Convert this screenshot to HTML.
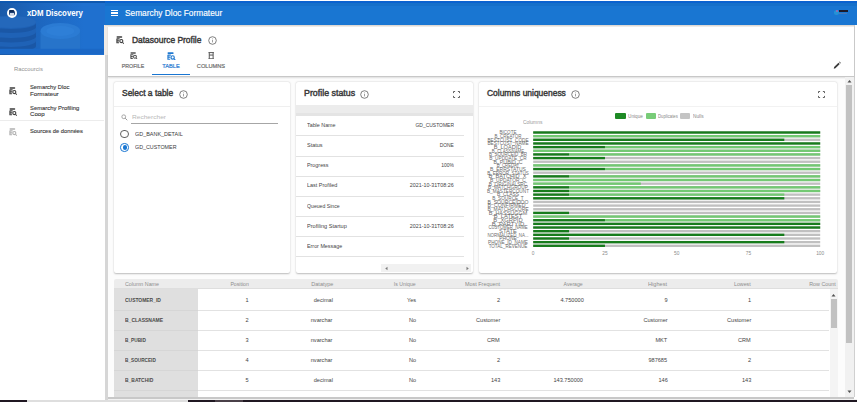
<!DOCTYPE html>
<html><head><meta charset="utf-8"><style>
html,body{margin:0;padding:0;width:857px;height:402px;overflow:hidden;background:#fff;position:relative;font-family:'Liberation Sans',sans-serif;}
.t{position:absolute;white-space:nowrap;font-family:'Liberation Sans',sans-serif;}
</style></head><body>
<div style="position:absolute;left:0px;top:1px;width:857px;height:24px;background:#1976d2;"></div>
<div style="position:absolute;left:0px;top:1px;width:857px;height:1.8px;background:#0b62cf;"></div>
<div style="position:absolute;left:0px;top:2.8px;width:857px;height:3.6px;background:#1670c9;"></div>
<svg style="position:absolute;left:0;top:1px" width="105" height="54" viewBox="0 1 105 54">
<defs><linearGradient id="hg" x1="0" x2="1" y1="0" y2="0"><stop offset="0" stop-color="#1a5aa9"/><stop offset="0.35" stop-color="#1d66be"/><stop offset="0.8" stop-color="#1f70cf"/></linearGradient></defs>
<rect x="0" y="1" width="105" height="54" fill="url(#hg)"/>
<path d="M-14 22 v24 a25 6 0 0 0 50 0 v-24 z" fill="#1f62b6"/>
<path d="M-14 23 v4 a25 6 0 0 0 50 0 v-4 a25 6 0 0 1 -50 0z" fill="#1a57a6"/>
<path d="M-14 32 v4.5 a25 6 0 0 0 50 0 v-4.5 a25 6 0 0 1 -50 0z" fill="#1a57a6"/>
<path d="M-14 41 v5 a25 6 0 0 0 50 0 v-5 a25 6 0 0 1 -50 0z" fill="#1a57a6"/>
<ellipse cx="11" cy="22" rx="25" ry="6" fill="#2468bb"/>
<path d="M40.5 31 v18 a19.8 4.5 0 0 0 39.6 0 v-18z" fill="#2774ca"/>
<ellipse cx="60.3" cy="31" rx="19.8" ry="8" fill="#2b7bd3"/>
<ellipse cx="60.3" cy="31" rx="14" ry="5" fill="#2e7fd7"/>
<rect x="0" y="48.8" width="105" height="5.2" fill="#1b68c6"/>
<rect x="0" y="1" width="105" height="2" fill="#0f58b0"/>
</svg>
<div style="position:absolute;left:6.8px;top:7.9px;width:6.4px;height:6.4px;border:2px solid #fff;border-radius:50%;background:#1d3f73"></div><div style="position:absolute;left:9.6px;top:12.6px;width:4.4px;height:3px;background:#cfd8e6"></div><div style="position:absolute;left:9.3px;top:10.2px;width:5px;height:2px;border-radius:1px;background:#0f2a55"></div><div class="t" style="left:26.60px;top:8.20px;font-size:8.5px;line-height:10.20px;color:#fff;font-weight:700;letter-spacing:0px;transform:scaleX(0.9180);transform-origin:left center;">xDM Discovery</div>
<div style="position:absolute;left:110.8px;top:10.0px;width:7.4px;height:1.3px;background:#fff;"></div>
<div style="position:absolute;left:110.8px;top:12.4px;width:7.4px;height:1.3px;background:#fff;"></div>
<div style="position:absolute;left:110.8px;top:14.8px;width:7.4px;height:1.3px;background:#fff;"></div>
<div class="t" style="left:124.80px;top:7.72px;font-size:8.8px;line-height:10.56px;color:#fff;font-weight:400;letter-spacing:0px;-webkit-text-stroke:0.15px #fff;transform:scaleX(0.9466);transform-origin:left center;">Semarchy Dloc Formateur</div>
<div style="position:absolute;left:835.5px;top:10.2px;width:2.2px;height:2.2px;background:#e0309a;border-radius:50%;"></div>
<div style="position:absolute;left:834px;top:9.5px;width:5px;height:5px;border-radius:50%;background:rgba(60,200,220,.35);"></div>
<div style="position:absolute;left:838.5px;top:10.2px;width:9px;height:2px;background:#1a1a2a;"></div>
<div style="position:absolute;left:839px;top:13.2px;width:8px;height:0.8px;background:#4a7ab8;"></div>
<div style="position:absolute;left:0px;top:55px;width:104px;height:347px;background:#fff;"></div>
<div class="t" style="left:13.50px;top:64.58px;font-size:6.2px;line-height:7.44px;color:#909090;font-weight:400;letter-spacing:0px;transform:scaleX(0.9419);transform-origin:left center;">Raccourcis</div>
<svg style="position:absolute;left:8.6px;top:86.8px" width="8" height="8" viewBox="0 0 16 16"><rect x="1" y="0.6" width="11.5" height="3" rx="1.4" fill="#3c3c3c"/><path d="M1.8 5v9.4M1.8 5.8h5.4M1.8 9.7h4.2M1.8 13.6h4.2" stroke="#3c3c3c" stroke-width="2.2" fill="none"/><circle cx="10.6" cy="10.2" r="3.1" stroke="#3c3c3c" stroke-width="2.2" fill="none"/><path d="M12.9 12.5l2.7 2.9" stroke="#3c3c3c" stroke-width="2.1"/></svg><div class="t" style="left:30.20px;top:84.36px;font-size:5.9px;line-height:7.08px;color:#3a3a3a;font-weight:400;letter-spacing:0px;-webkit-text-stroke:0.12px #3a3a3a;transform:scaleX(0.9850);transform-origin:left center;">Semarchy Dloc</div>
<div class="t" style="left:30.20px;top:90.76px;font-size:5.9px;line-height:7.08px;color:#3a3a3a;font-weight:400;letter-spacing:0px;-webkit-text-stroke:0.12px #3a3a3a;transform:scaleX(1.0556);transform-origin:left center;">Formateur</div>
<svg style="position:absolute;left:8.6px;top:107.5px" width="8" height="8" viewBox="0 0 16 16"><rect x="1" y="0.6" width="11.5" height="3" rx="1.4" fill="#3c3c3c"/><path d="M1.8 5v9.4M1.8 5.8h5.4M1.8 9.7h4.2M1.8 13.6h4.2" stroke="#3c3c3c" stroke-width="2.2" fill="none"/><circle cx="10.6" cy="10.2" r="3.1" stroke="#3c3c3c" stroke-width="2.2" fill="none"/><path d="M12.9 12.5l2.7 2.9" stroke="#3c3c3c" stroke-width="2.1"/></svg><div class="t" style="left:30.20px;top:104.66px;font-size:5.9px;line-height:7.08px;color:#3a3a3a;font-weight:400;letter-spacing:0px;-webkit-text-stroke:0.12px #3a3a3a;transform:scaleX(0.9960);transform-origin:left center;">Semarchy Profiling</div>
<div class="t" style="left:30.20px;top:110.76px;font-size:5.9px;line-height:7.08px;color:#3a3a3a;font-weight:400;letter-spacing:0px;-webkit-text-stroke:0.12px #3a3a3a;transform:scaleX(1.0357);transform-origin:left center;">Coop</div>
<div style="position:absolute;left:0px;top:119.5px;width:104px;height:0.7px;background:#ececec;"></div>
<svg style="position:absolute;left:8.6px;top:127.6px" width="8" height="8" viewBox="0 0 16 16"><rect x="1" y="0.6" width="11.5" height="3" rx="1.4" fill="#b0b0b0"/><path d="M1.8 5v9.4M1.8 5.8h5.4M1.8 9.7h4.2M1.8 13.6h4.2" stroke="#b0b0b0" stroke-width="2.2" fill="none"/><circle cx="10.6" cy="10.2" r="3.1" stroke="#b0b0b0" stroke-width="2.2" fill="none"/><path d="M12.9 12.5l2.7 2.9" stroke="#b0b0b0" stroke-width="2.1"/></svg><div class="t" style="left:30.20px;top:127.76px;font-size:5.9px;line-height:7.08px;color:#3a3a3a;font-weight:400;letter-spacing:0px;-webkit-text-stroke:0.12px #3a3a3a;transform:scaleX(0.9796);transform-origin:left center;">Sources de données</div>
<div style="position:absolute;left:107.8px;top:397px;width:746px;height:2px;background:#c8c8c8;"></div>
<div style="position:absolute;left:104.5px;top:399px;width:752.5px;height:1.3px;background:#f2f2f2;"></div>
<div style="position:absolute;left:0px;top:400.3px;width:857px;height:1.7px;background:#201822;"></div>
<div style="position:absolute;left:27px;top:400.3px;width:160.5px;height:1.7px;background:#dedede;"></div>
<div style="position:absolute;left:215px;top:400.3px;width:28px;height:1.7px;background:#4a4048;"></div>
<div style="position:absolute;left:104.5px;top:25px;width:749.5px;height:372px;background:#fcfcfc;"></div>
<div style="position:absolute;left:853.5px;top:25px;width:1px;height:372px;background:#d0d0d0;"></div>
<div style="position:absolute;left:104.6px;top:55px;width:3.2px;height:345px;background:#d6d6d6;"></div>
<div style="position:absolute;left:104px;top:25px;width:3.5px;height:30px;background:#f0ebe6;"></div>
<div style="position:absolute;left:107.5px;top:25px;width:746.5px;height:50.5px;background:#fff;border-bottom:1px solid #c8c8c8;box-shadow:0 1px 1.5px rgba(0,0,0,.12);"></div>
<svg style="position:absolute;left:116px;top:36.2px" width="8" height="8" viewBox="0 0 16 16"><rect x="1" y="0.6" width="11.5" height="3" rx="1.4" fill="#3c3c3c"/><path d="M1.8 5v9.4M1.8 5.8h5.4M1.8 9.7h4.2M1.8 13.6h4.2" stroke="#3c3c3c" stroke-width="2.2" fill="none"/><circle cx="10.6" cy="10.2" r="3.1" stroke="#3c3c3c" stroke-width="2.2" fill="none"/><path d="M12.9 12.5l2.7 2.9" stroke="#3c3c3c" stroke-width="2.1"/></svg><div class="t" style="left:132.00px;top:34.58px;font-size:9.2px;line-height:11.04px;color:#3a3a3a;font-weight:400;letter-spacing:0px;-webkit-text-stroke:0.45px #3a3a3a;transform:scaleX(0.9171);transform-origin:left center;">Datasource Profile</div>
<svg style="position:absolute;left:207.5px;top:35.8px" width="9" height="9" viewBox="0 0 18 18"><circle cx="9" cy="9" r="7.6" stroke="#555" stroke-width="1.5" fill="none"/><rect x="8.2" y="8" width="1.6" height="4.8" fill="#888"/><rect x="8.2" y="5" width="1.6" height="1.6" fill="#888"/></svg><svg style="position:absolute;left:130.2px;top:51.5px" width="7.5" height="7.5" viewBox="0 0 16 16"><rect x="1" y="0.6" width="11.5" height="3" rx="1.4" fill="#505050"/><path d="M1.8 5v9.4M1.8 5.8h5.4M1.8 9.7h4.2M1.8 13.6h4.2" stroke="#505050" stroke-width="2.2" fill="none"/><circle cx="10.6" cy="10.2" r="3.1" stroke="#505050" stroke-width="2.2" fill="none"/><path d="M12.9 12.5l2.7 2.9" stroke="#505050" stroke-width="2.1"/></svg><div class="t" style="left:133.45px;top:62.54px;font-size:5.6px;line-height:6.72px;color:#707070;font-weight:400;letter-spacing:0px;-webkit-text-stroke:0.2px #707070;transform:translateX(-50%) scaleX(0.9375);transform-origin:center center;">PROFILE</div>
<svg style="position:absolute;left:167.1px;top:51.5px" width="8.5" height="8.5" viewBox="0 0 16 16"><rect x="1" y="0.6" width="11.5" height="3" rx="1.4" fill="#1f78d0"/><path d="M1.8 5v9.4M1.8 5.8h5.4M1.8 9.7h4.2M1.8 13.6h4.2" stroke="#1f78d0" stroke-width="2.2" fill="none"/><circle cx="10.6" cy="10.2" r="3.1" stroke="#1f78d0" stroke-width="2.2" fill="none"/><path d="M12.9 12.5l2.7 2.9" stroke="#1f78d0" stroke-width="2.1"/></svg><div class="t" style="left:171.15px;top:62.54px;font-size:5.6px;line-height:6.72px;color:#2a7bd2;font-weight:400;letter-spacing:0px;-webkit-text-stroke:0.2px #2a7bd2;transform:translateX(-50%) scaleX(1.0176);transform-origin:center center;">TABLE</div>
<svg style="position:absolute;left:207.9px;top:51.8px" width="6.4" height="7.4" viewBox="0 0 13 15"><path d="M1 1.2h11M1 13.8h11M2.6 1.2v12.6M10.4 1.2v12.6M2.6 6.2h7.8" stroke="#555" stroke-width="2" fill="none"/></svg><div class="t" style="left:210.95px;top:62.54px;font-size:5.6px;line-height:6.72px;color:#707070;font-weight:400;letter-spacing:0px;-webkit-text-stroke:0.2px #707070;transform:translateX(-50%) scaleX(1.0107);transform-origin:center center;">COLUMNS</div>
<div style="position:absolute;left:152px;top:73.9px;width:38.3px;height:1.6px;background:#1976d2;"></div>
<svg style="position:absolute;left:832.6px;top:60.6px" width="8.5" height="8.5" viewBox="0 0 17 17"><path d="M1.5 15.5l0.8-3.4 8.6-8.6 2.6 2.6-8.6 8.6z" fill="#3a3a3a"/><path d="M12.2 2.2l1-1 2.6 2.6-1 1z" fill="#3a3a3a"/></svg><div style="position:absolute;left:104.5px;top:25px;width:749px;height:2.2px;background:linear-gradient(#d6d0ca,#f6f4f2);"></div>
<div style="position:absolute;left:113.6px;top:82px;width:176.9px;height:191.3px;background:#fff;border-radius:2px;box-shadow:0 0.5px 1.8px rgba(0,0,0,.26);"></div>
<div style="position:absolute;left:296px;top:82px;width:176.5px;height:191.2px;background:#fff;border-radius:2px;box-shadow:0 0.5px 1.8px rgba(0,0,0,.26);"></div>
<div style="position:absolute;left:478.5px;top:82px;width:358px;height:191.2px;background:#fff;border-radius:2px;box-shadow:0 0.5px 1.8px rgba(0,0,0,.26);"></div>
<div class="t" style="left:121.50px;top:87.88px;font-size:9.2px;line-height:11.04px;color:#3a3a3a;font-weight:400;letter-spacing:0px;-webkit-text-stroke:0.45px #3a3a3a;transform:scaleX(0.9196);transform-origin:left center;">Select a table</div>
<svg style="position:absolute;left:178.8px;top:89.8px" width="9" height="9" viewBox="0 0 18 18"><circle cx="9" cy="9" r="7.6" stroke="#555" stroke-width="1.5" fill="none"/><rect x="8.2" y="8" width="1.6" height="4.8" fill="#888"/><rect x="8.2" y="5" width="1.6" height="1.6" fill="#888"/></svg><div style="position:absolute;left:113.6px;top:105.8px;width:176.9px;height:0.6px;background:#efefef;"></div>
<svg style="position:absolute;left:121px;top:114px" width="7" height="7" viewBox="0 0 14 14"><circle cx="5.5" cy="5.5" r="3.8" stroke="#999" stroke-width="1.7" fill="none"/><path d="M8.3 8.3l4.2 4.2" stroke="#999" stroke-width="2"/></svg><div class="t" style="left:131.60px;top:113.48px;font-size:6.2px;line-height:7.44px;color:#b8b8b8;font-weight:400;letter-spacing:0px;transform:scaleX(1.0625);transform-origin:left center;">Rechercher</div>
<div style="position:absolute;left:131px;top:122.8px;width:147px;height:1.1px;background:#a6a6a6;"></div>
<div style="position:absolute;left:120.3px;top:129.5px;width:6.4px;height:6.4px;border:1.3px solid #606060;border-radius:50%"></div><div class="t" style="left:135.00px;top:130.74px;font-size:5.6px;line-height:6.72px;color:#3a3a3a;font-weight:400;letter-spacing:0px;transform:scaleX(0.9735);transform-origin:left center;">GD_BANK_DETAIL</div>
<div style="position:absolute;left:120.3px;top:143.2px;width:6.4px;height:6.4px;border:1.3px solid #1976d2;border-radius:50%"></div><div style="position:absolute;left:122.55px;top:145.45px;width:4.5px;height:4.5px;background:#1976d2;border-radius:50%;"></div>
<div class="t" style="left:135.00px;top:144.34px;font-size:5.6px;line-height:6.72px;color:#3a3a3a;font-weight:400;letter-spacing:0px;transform:scaleX(0.9558);transform-origin:left center;">GD_CUSTOMER</div>
<div class="t" style="left:304.20px;top:87.88px;font-size:9.2px;line-height:11.04px;color:#3a3a3a;font-weight:400;letter-spacing:0px;-webkit-text-stroke:0.45px #3a3a3a;transform:scaleX(0.9623);transform-origin:left center;">Profile status</div>
<svg style="position:absolute;left:360.0px;top:89.8px" width="9" height="9" viewBox="0 0 18 18"><circle cx="9" cy="9" r="7.6" stroke="#555" stroke-width="1.5" fill="none"/><rect x="8.2" y="8" width="1.6" height="4.8" fill="#888"/><rect x="8.2" y="5" width="1.6" height="1.6" fill="#888"/></svg><svg style="position:absolute;left:452.6px;top:91px" width="7" height="7" viewBox="0 0 14 14"><path d="M1 4.2V1h3.2M9.8 1H13v3.2M13 9.8V13H9.8M4.2 13H1V9.8" stroke="#5a5a5a" stroke-width="1.9" fill="none"/></svg><div style="position:absolute;left:296px;top:105px;width:176.5px;height:10.7px;background:#ececec;"></div>
<div style="position:absolute;left:296px;top:113.2px;width:176.5px;height:2.5px;background:#e4e4e4;"></div>
<div class="t" style="left:307.30px;top:121.92px;font-size:5.8px;line-height:6.96px;color:#444;font-weight:400;letter-spacing:0px;transform:scaleX(0.9226);transform-origin:left center;">Table Name</div>
<div class="t" style="right:402.70px;top:121.92px;font-size:5.8px;line-height:6.96px;color:#444;font-weight:400;letter-spacing:0px;transform:scaleX(0.8556);transform-origin:right center;">GD_CUSTOMER</div>
<div style="position:absolute;left:296px;top:135.4px;width:168px;height:0.8px;background:#e2e2e2;"></div>
<div class="t" style="left:307.30px;top:142.07px;font-size:5.8px;line-height:6.96px;color:#444;font-weight:400;letter-spacing:0px;transform:scaleX(0.9500);transform-origin:left center;">Status</div>
<div class="t" style="right:402.91px;top:142.07px;font-size:5.8px;line-height:6.96px;color:#444;font-weight:400;letter-spacing:0px;transform:scaleX(0.8412);transform-origin:right center;">DONE</div>
<div style="position:absolute;left:296px;top:155.55px;width:168px;height:0.8px;background:#e2e2e2;"></div>
<div class="t" style="left:307.30px;top:162.22px;font-size:5.8px;line-height:6.96px;color:#444;font-weight:400;letter-spacing:0px;transform:scaleX(0.9261);transform-origin:left center;">Progress</div>
<div class="t" style="right:402.85px;top:162.22px;font-size:5.8px;line-height:6.96px;color:#444;font-weight:400;letter-spacing:0px;transform:scaleX(0.8533);transform-origin:right center;">100%</div>
<div style="position:absolute;left:296px;top:175.7px;width:168px;height:0.8px;background:#e2e2e2;"></div>
<div class="t" style="left:307.30px;top:182.37px;font-size:5.8px;line-height:6.96px;color:#444;font-weight:400;letter-spacing:0px;transform:scaleX(0.9437);transform-origin:left center;">Last Profiled</div>
<div class="t" style="right:402.97px;top:182.37px;font-size:5.8px;line-height:6.96px;color:#444;font-weight:400;letter-spacing:0px;transform:scaleX(0.9188);transform-origin:right center;">2021-10-31T08:26</div>
<div style="position:absolute;left:296px;top:195.85px;width:168px;height:0.8px;background:#e2e2e2;"></div>
<div class="t" style="left:307.30px;top:202.52px;font-size:5.8px;line-height:6.96px;color:#444;font-weight:400;letter-spacing:0px;transform:scaleX(0.8892);transform-origin:left center;">Queued Since</div>
<div style="position:absolute;left:296px;top:216.0px;width:168px;height:0.8px;background:#e2e2e2;"></div>
<div class="t" style="left:307.30px;top:222.67px;font-size:5.8px;line-height:6.96px;color:#444;font-weight:400;letter-spacing:0px;transform:scaleX(0.9659);transform-origin:left center;">Profiling Startup</div>
<div class="t" style="right:402.97px;top:222.67px;font-size:5.8px;line-height:6.96px;color:#444;font-weight:400;letter-spacing:0px;transform:scaleX(0.9188);transform-origin:right center;">2021-10-31T08:26</div>
<div style="position:absolute;left:296px;top:236.15px;width:168px;height:0.8px;background:#e2e2e2;"></div>
<div class="t" style="left:307.30px;top:242.82px;font-size:5.8px;line-height:6.96px;color:#444;font-weight:400;letter-spacing:0px;transform:scaleX(0.9237);transform-origin:left center;">Error Message</div>
<div style="position:absolute;left:296px;top:256.3px;width:168px;height:0.8px;background:#e2e2e2;"></div>
<div style="position:absolute;left:381px;top:263.8px;width:89.5px;height:8.6px;background:#f1f1f1;"></div>
<svg style="position:absolute;left:383.5px;top:265.6px" width="5" height="5" viewBox="0 0 10 10"><path d="M7 1.5L2.5 5 7 8.5z" fill="#7a7a7a"/></svg><svg style="position:absolute;left:464.5px;top:265.6px" width="5" height="5" viewBox="0 0 10 10"><path d="M3 1.5L7.5 5 3 8.5z" fill="#7a7a7a"/></svg><div class="t" style="left:486.60px;top:87.88px;font-size:9.2px;line-height:11.04px;color:#3a3a3a;font-weight:400;letter-spacing:0px;-webkit-text-stroke:0.45px #3a3a3a;transform:scaleX(0.9186);transform-origin:left center;">Columns uniqueness</div>
<svg style="position:absolute;left:571.2px;top:89.6px" width="9" height="9" viewBox="0 0 18 18"><circle cx="9" cy="9" r="7.6" stroke="#555" stroke-width="1.5" fill="none"/><rect x="8.2" y="8" width="1.6" height="4.8" fill="#888"/><rect x="8.2" y="5" width="1.6" height="1.6" fill="#888"/></svg><svg style="position:absolute;left:817.5px;top:91px" width="7" height="7" viewBox="0 0 14 14"><path d="M1 4.2V1h3.2M9.8 1H13v3.2M13 9.8V13H9.8M4.2 13H1V9.8" stroke="#5a5a5a" stroke-width="1.9" fill="none"/></svg><div style="position:absolute;left:478.5px;top:105.8px;width:358px;height:0.6px;background:#f2f2f2;"></div>
<div style="position:absolute;left:615.2px;top:113.4px;width:10.4px;height:5.3px;background:#1e8a25;border-radius:1px;"></div>
<div class="t" style="left:627.60px;top:113.00px;font-size:5px;line-height:6.00px;color:#888;font-weight:400;letter-spacing:0px;transform:scaleX(0.9375);transform-origin:left center;">Unique</div>
<div style="position:absolute;left:645.5px;top:113.4px;width:10.4px;height:5.3px;background:#78cc78;border-radius:1px;"></div>
<div class="t" style="left:658.00px;top:113.00px;font-size:5px;line-height:6.00px;color:#888;font-weight:400;letter-spacing:0px;transform:scaleX(0.8478);transform-origin:left center;">Duplicates</div>
<div style="position:absolute;left:680px;top:113.4px;width:10.4px;height:5.3px;background:#c4c4c4;border-radius:1px;"></div>
<div class="t" style="left:692.50px;top:113.00px;font-size:5px;line-height:6.00px;color:#888;font-weight:400;letter-spacing:0px;transform:scaleX(0.9545);transform-origin:left center;">Nulls</div>
<div class="t" style="left:523.00px;top:119.00px;font-size:5px;line-height:6.00px;color:#999;font-weight:400;letter-spacing:0px;transform:scaleX(0.9800);transform-origin:left center;">Columns</div>
<svg style="position:absolute;left:0;top:0" width="857" height="402" viewBox="0 0 857 402"><rect x="533.2" y="131.322" width="287.0" height="2.350" fill="#c0c0c0"/><rect x="533.2" y="131.322" width="287.000" height="2.350" fill="#177c1c"/><rect x="533.2" y="134.977" width="287.0" height="2.350" fill="#c0c0c0"/><rect x="533.200" y="134.977" width="287.000" height="2.350" fill="#72c972"/><rect x="533.2" y="138.632" width="287.0" height="2.350" fill="#c0c0c0"/><rect x="533.2" y="138.632" width="251.125" height="2.350" fill="#177c1c"/><rect x="533.2" y="142.287" width="287.0" height="2.350" fill="#c0c0c0"/><rect x="533.2" y="142.287" width="287.000" height="2.350" fill="#177c1c"/><rect x="533.2" y="145.942" width="287.0" height="2.350" fill="#c0c0c0"/><rect x="604.950" y="145.942" width="215.250" height="2.350" fill="#72c972"/><rect x="533.2" y="145.942" width="71.750" height="2.350" fill="#177c1c"/><rect x="533.2" y="149.597" width="287.0" height="2.350" fill="#c0c0c0"/><rect x="533.200" y="149.597" width="287.000" height="2.350" fill="#72c972"/><rect x="533.2" y="153.252" width="287.0" height="2.350" fill="#c0c0c0"/><rect x="569.075" y="153.252" width="251.125" height="2.350" fill="#72c972"/><rect x="533.2" y="153.252" width="35.875" height="2.350" fill="#177c1c"/><rect x="533.2" y="156.907" width="287.0" height="2.350" fill="#c0c0c0"/><rect x="533.2" y="156.907" width="71.750" height="2.350" fill="#177c1c"/><rect x="533.2" y="160.562" width="287.0" height="2.350" fill="#c0c0c0"/><rect x="533.2" y="164.217" width="287.0" height="2.350" fill="#c0c0c0"/><rect x="533.200" y="164.217" width="287.000" height="2.350" fill="#72c972"/><rect x="533.2" y="167.872" width="287.0" height="2.350" fill="#c0c0c0"/><rect x="604.950" y="167.872" width="215.250" height="2.350" fill="#72c972"/><rect x="533.2" y="167.872" width="71.750" height="2.350" fill="#177c1c"/><rect x="533.2" y="171.527" width="287.0" height="2.350" fill="#c0c0c0"/><rect x="533.2" y="175.182" width="287.0" height="2.350" fill="#c0c0c0"/><rect x="569.075" y="175.182" width="251.125" height="2.350" fill="#72c972"/><rect x="533.2" y="175.182" width="35.875" height="2.350" fill="#177c1c"/><rect x="533.2" y="178.837" width="287.0" height="2.350" fill="#c0c0c0"/><rect x="533.200" y="178.837" width="287.000" height="2.350" fill="#72c972"/><rect x="533.2" y="182.492" width="287.0" height="2.350" fill="#c0c0c0"/><rect x="533.200" y="182.492" width="107.625" height="2.350" fill="#72c972"/><rect x="533.2" y="186.147" width="287.0" height="2.350" fill="#c0c0c0"/><rect x="569.075" y="186.147" width="251.125" height="2.350" fill="#72c972"/><rect x="533.2" y="186.147" width="35.875" height="2.350" fill="#177c1c"/><rect x="533.2" y="189.802" width="287.0" height="2.350" fill="#c0c0c0"/><rect x="569.075" y="189.802" width="251.125" height="2.350" fill="#72c972"/><rect x="533.2" y="189.802" width="35.875" height="2.350" fill="#177c1c"/><rect x="533.2" y="193.457" width="287.0" height="2.350" fill="#c0c0c0"/><rect x="569.075" y="193.457" width="215.250" height="2.350" fill="#72c972"/><rect x="533.2" y="193.457" width="35.875" height="2.350" fill="#177c1c"/><rect x="533.2" y="197.112" width="287.0" height="2.350" fill="#c0c0c0"/><rect x="533.2" y="197.112" width="251.125" height="2.350" fill="#177c1c"/><rect x="533.2" y="200.767" width="287.0" height="2.350" fill="#c0c0c0"/><rect x="533.2" y="204.422" width="287.0" height="2.350" fill="#c0c0c0"/><rect x="533.2" y="208.077" width="287.0" height="2.350" fill="#c0c0c0"/><rect x="533.2" y="211.732" width="287.0" height="2.350" fill="#c0c0c0"/><rect x="533.2" y="211.732" width="35.875" height="2.350" fill="#177c1c"/><rect x="533.2" y="215.387" width="287.0" height="2.350" fill="#c0c0c0"/><rect x="533.200" y="215.387" width="287.000" height="2.350" fill="#72c972"/><rect x="533.2" y="219.042" width="287.0" height="2.350" fill="#c0c0c0"/><rect x="604.950" y="219.042" width="215.250" height="2.350" fill="#72c972"/><rect x="533.2" y="219.042" width="71.750" height="2.350" fill="#177c1c"/><rect x="533.2" y="222.697" width="287.0" height="2.350" fill="#c0c0c0"/><rect x="533.2" y="222.697" width="287.000" height="2.350" fill="#177c1c"/><rect x="533.2" y="226.352" width="287.0" height="2.350" fill="#c0c0c0"/><rect x="533.2" y="226.352" width="287.000" height="2.350" fill="#177c1c"/><rect x="533.2" y="230.007" width="287.0" height="2.350" fill="#c0c0c0"/><rect x="533.2" y="230.007" width="35.875" height="2.350" fill="#177c1c"/><rect x="533.2" y="233.662" width="287.0" height="2.350" fill="#c0c0c0"/><rect x="533.2" y="233.662" width="251.125" height="2.350" fill="#177c1c"/><rect x="533.2" y="237.317" width="287.0" height="2.350" fill="#c0c0c0"/><rect x="533.2" y="237.317" width="35.875" height="2.350" fill="#177c1c"/><rect x="533.2" y="240.972" width="287.0" height="2.350" fill="#c0c0c0"/><rect x="533.2" y="240.972" width="251.125" height="2.350" fill="#177c1c"/><rect x="533.2" y="244.627" width="287.0" height="2.350" fill="#c0c0c0"/><rect x="533.2" y="244.627" width="71.750" height="2.350" fill="#177c1c"/></svg>
<div class="t" style="left:507.50px;top:129.34px;font-size:5.6px;line-height:6.72px;color:#6c6c6c;font-weight:400;letter-spacing:0px;transform:translateX(-50%) scaleX(0.8095);transform-origin:center center;">BICOTE</div>
<div class="t" style="left:507.50px;top:132.99px;font-size:5.6px;line-height:6.72px;color:#6c6c6c;font-weight:400;letter-spacing:0px;transform:translateX(-50%) scaleX(0.7941);transform-origin:center center;">B_CREATOR</div>
<div class="t" style="left:507.50px;top:136.65px;font-size:5.6px;line-height:6.72px;color:#6c6c6c;font-weight:400;letter-spacing:0px;transform:translateX(-50%) scaleX(0.8367);transform-origin:center center;">BESTCUST_CODE</div>
<div class="t" style="left:507.50px;top:140.30px;font-size:5.6px;line-height:6.72px;color:#6c6c6c;font-weight:400;letter-spacing:0px;transform:translateX(-50%) scaleX(0.8367);transform-origin:center center;">BESTCUST_NAME</div>
<div class="t" style="left:507.50px;top:143.96px;font-size:5.6px;line-height:6.72px;color:#6c6c6c;font-weight:400;letter-spacing:0px;transform:translateX(-50%) scaleX(1.0000);transform-origin:center center;">B_LOADID</div>
<div class="t" style="left:507.50px;top:147.61px;font-size:5.6px;line-height:6.72px;color:#6c6c6c;font-weight:400;letter-spacing:0px;transform:translateX(-50%) scaleX(0.7805);transform-origin:center center;">B_CLASSNAME</div>
<div class="t" style="left:507.50px;top:151.27px;font-size:5.6px;line-height:6.72px;color:#6c6c6c;font-weight:400;letter-spacing:0px;transform:translateX(-50%) scaleX(0.8085);transform-origin:center center;">B_SOURCEID_BR</div>
<div class="t" style="left:507.50px;top:154.92px;font-size:5.6px;line-height:6.72px;color:#6c6c6c;font-weight:400;letter-spacing:0px;transform:translateX(-50%) scaleX(0.8409);transform-origin:center center;">B_UPDDATE_CR</div>
<div class="t" style="left:507.50px;top:158.58px;font-size:5.6px;line-height:6.72px;color:#6c6c6c;font-weight:400;letter-spacing:0px;transform:translateX(-50%) scaleX(0.9355);transform-origin:center center;">B_PUBID_C</div>
<div class="t" style="left:507.50px;top:162.23px;font-size:5.6px;line-height:6.72px;color:#6c6c6c;font-weight:400;letter-spacing:0px;transform:translateX(-50%) scaleX(0.7586);transform-origin:center center;">B_CREDAT</div>
<div class="t" style="left:507.50px;top:165.89px;font-size:5.6px;line-height:6.72px;color:#6c6c6c;font-weight:400;letter-spacing:0px;transform:translateX(-50%) scaleX(0.9000);transform-origin:center center;">B_ERRSTATUS</div>
<div class="t" style="left:507.50px;top:169.54px;font-size:5.6px;line-height:6.72px;color:#6c6c6c;font-weight:400;letter-spacing:0px;transform:translateX(-50%) scaleX(0.8039);transform-origin:center center;">B_ERROR_STATUS</div>
<div class="t" style="left:507.50px;top:173.20px;font-size:5.6px;line-height:6.72px;color:#6c6c6c;font-weight:400;letter-spacing:0px;transform:translateX(-50%) scaleX(1.0000);transform-origin:center center;">B_BATCHID_X</div>
<div class="t" style="left:507.50px;top:176.85px;font-size:5.6px;line-height:6.72px;color:#6c6c6c;font-weight:400;letter-spacing:0px;transform:translateX(-50%) scaleX(0.8780);transform-origin:center center;">B_UPDATOR_C</div>
<div class="t" style="left:507.50px;top:180.51px;font-size:5.6px;line-height:6.72px;color:#6c6c6c;font-weight:400;letter-spacing:0px;transform:translateX(-50%) scaleX(0.8444);transform-origin:center center;">B_ORIGINALSRC</div>
<div class="t" style="left:507.50px;top:184.16px;font-size:5.6px;line-height:6.72px;color:#6c6c6c;font-weight:400;letter-spacing:0px;transform:translateX(-50%) scaleX(0.8511);transform-origin:center center;">B_MATCHGROUP</div>
<div class="t" style="left:507.50px;top:187.82px;font-size:5.6px;line-height:6.72px;color:#6c6c6c;font-weight:400;letter-spacing:0px;transform:translateX(-50%) scaleX(0.8400);transform-origin:center center;">B_MASTERCOUNT</div>
<div class="t" style="left:507.50px;top:191.47px;font-size:5.6px;line-height:6.72px;color:#6c6c6c;font-weight:400;letter-spacing:0px;transform:translateX(-50%) scaleX(0.8800);transform-origin:center center;">B_CLASS</div>
<div class="t" style="left:507.50px;top:195.13px;font-size:5.6px;line-height:6.72px;color:#6c6c6c;font-weight:400;letter-spacing:0px;transform:translateX(-50%) scaleX(0.8378);transform-origin:center center;">B_SOURCE_T</div>
<div class="t" style="left:507.50px;top:198.78px;font-size:5.6px;line-height:6.72px;color:#6c6c6c;font-weight:400;letter-spacing:0px;transform:translateX(-50%) scaleX(0.9111);transform-origin:center center;">B_SOURCEIDOO</div>
<div class="t" style="left:507.50px;top:202.44px;font-size:5.6px;line-height:6.72px;color:#6c6c6c;font-weight:400;letter-spacing:0px;transform:translateX(-50%) scaleX(0.9318);transform-origin:center center;">B_CONFIRMED_</div>
<div class="t" style="left:507.50px;top:206.09px;font-size:5.6px;line-height:6.72px;color:#6c6c6c;font-weight:400;letter-spacing:0px;transform:translateX(-50%) scaleX(0.8913);transform-origin:center center;">B_MATCHSCORE</div>
<div class="t" style="left:507.50px;top:209.75px;font-size:5.6px;line-height:6.72px;color:#6c6c6c;font-weight:400;letter-spacing:0px;transform:translateX(-50%) scaleX(0.9744);transform-origin:center center;">B_HASSUGGM</div>
<div class="t" style="left:507.50px;top:213.40px;font-size:5.6px;line-height:6.72px;color:#6c6c6c;font-weight:400;letter-spacing:0px;transform:translateX(-50%) scaleX(1.0357);transform-origin:center center;">B_LATEST</div>
<div class="t" style="left:507.50px;top:217.06px;font-size:5.6px;line-height:6.72px;color:#6c6c6c;font-weight:400;letter-spacing:0px;transform:translateX(-50%) scaleX(1.0357);transform-origin:center center;">B_XGRPID</div>
<div class="t" style="left:507.50px;top:220.71px;font-size:5.6px;line-height:6.72px;color:#6c6c6c;font-weight:400;letter-spacing:0px;transform:translateX(-50%) scaleX(1.0645);transform-origin:center center;">B_PARTYID</div>
<div class="t" style="left:507.50px;top:224.37px;font-size:5.6px;line-height:6.72px;color:#6c6c6c;font-weight:400;letter-spacing:0px;transform:translateX(-50%) scaleX(0.7647);transform-origin:center center;">CUSTOMER_NAME</div>
<div class="t" style="left:507.50px;top:228.02px;font-size:5.6px;line-height:6.72px;color:#6c6c6c;font-weight:400;letter-spacing:0px;transform:translateX(-50%) scaleX(1.0353);transform-origin:center center;">STATE</div>
<div class="t" style="left:507.50px;top:231.68px;font-size:5.6px;line-height:6.72px;color:#6c6c6c;font-weight:400;letter-spacing:0px;transform:translateX(-50%) scaleX(0.7885);transform-origin:center center;">NORMALIZED_NA...</div>
<div class="t" style="left:507.50px;top:235.33px;font-size:5.6px;line-height:6.72px;color:#6c6c6c;font-weight:400;letter-spacing:0px;transform:translateX(-50%) scaleX(0.8800);transform-origin:center center;">PHONE</div>
<div class="t" style="left:507.50px;top:238.99px;font-size:5.6px;line-height:6.72px;color:#6c6c6c;font-weight:400;letter-spacing:0px;transform:translateX(-50%) scaleX(0.8333);transform-origin:center center;">PHONE_ID_NAME</div>
<div class="t" style="left:507.50px;top:242.64px;font-size:5.6px;line-height:6.72px;color:#6c6c6c;font-weight:400;letter-spacing:0px;transform:translateX(-50%) scaleX(0.8125);transform-origin:center center;">TOTAL_REVENUE</div>
<div class="t" style="left:533.20px;top:250.72px;font-size:4.8px;line-height:5.76px;color:#8a8a8a;font-weight:400;letter-spacing:0px;transform:translateX(-50%) scaleX(1.0000);transform-origin:center center;">0</div>
<div class="t" style="left:604.95px;top:250.72px;font-size:4.8px;line-height:5.76px;color:#8a8a8a;font-weight:400;letter-spacing:0px;transform:translateX(-50%) scaleX(1.0000);transform-origin:center center;">25</div>
<div class="t" style="left:676.70px;top:250.72px;font-size:4.8px;line-height:5.76px;color:#8a8a8a;font-weight:400;letter-spacing:0px;transform:translateX(-50%) scaleX(1.0000);transform-origin:center center;">50</div>
<div class="t" style="left:748.45px;top:250.72px;font-size:4.8px;line-height:5.76px;color:#8a8a8a;font-weight:400;letter-spacing:0px;transform:translateX(-50%) scaleX(1.0000);transform-origin:center center;">75</div>
<div class="t" style="left:820.20px;top:250.72px;font-size:4.8px;line-height:5.76px;color:#8a8a8a;font-weight:400;letter-spacing:0px;transform:translateX(-50%) scaleX(1.0000);transform-origin:center center;">100</div>
<div style="position:absolute;left:113.5px;top:278.8px;width:724.5px;height:10.3px;background:#ececec;border-radius:2px 2px 0 0;"></div>
<div style="position:absolute;left:113.5px;top:288.4px;width:724.5px;height:0.8px;background:#dedede;"></div>
<div style="position:absolute;left:113.8px;top:289.1px;width:84.2px;height:107.9px;background:#dfdfdf;"></div>
<div style="position:absolute;left:198px;top:289.1px;width:631.5px;height:107.9px;background:#fff;"></div>
<div class="t" style="left:124.80px;top:281.14px;font-size:5.6px;line-height:6.72px;color:#8c8c8c;font-weight:400;letter-spacing:0px;transform:scaleX(0.9500);transform-origin:left center;">Column Name</div>
<div class="t" style="right:608.59px;top:281.14px;font-size:5.6px;line-height:6.72px;color:#8c8c8c;font-weight:400;letter-spacing:0px;transform:scaleX(0.9300);transform-origin:right center;">Position</div>
<div class="t" style="right:523.91px;top:281.14px;font-size:5.6px;line-height:6.72px;color:#8c8c8c;font-weight:400;letter-spacing:0px;transform:scaleX(0.9864);transform-origin:right center;">Datatype</div>
<div class="t" style="right:441.33px;top:281.14px;font-size:5.6px;line-height:6.72px;color:#8c8c8c;font-weight:400;letter-spacing:0px;transform:scaleX(0.9208);transform-origin:right center;">Is Unique</div>
<div class="t" style="right:356.92px;top:281.14px;font-size:5.6px;line-height:6.72px;color:#8c8c8c;font-weight:400;letter-spacing:0px;transform:scaleX(0.9722);transform-origin:right center;">Most Frequent</div>
<div class="t" style="right:273.85px;top:281.14px;font-size:5.6px;line-height:6.72px;color:#8c8c8c;font-weight:400;letter-spacing:0px;transform:scaleX(0.9238);transform-origin:right center;">Average</div>
<div class="t" style="right:189.63px;top:281.14px;font-size:5.6px;line-height:6.72px;color:#8c8c8c;font-weight:400;letter-spacing:0px;transform:scaleX(0.9947);transform-origin:right center;">Highest</div>
<div class="t" style="right:106.25px;top:281.14px;font-size:5.6px;line-height:6.72px;color:#8c8c8c;font-weight:400;letter-spacing:0px;transform:scaleX(0.9444);transform-origin:right center;">Lowest</div>
<div class="t" style="right:21.81px;top:281.14px;font-size:5.6px;line-height:6.72px;color:#8c8c8c;font-weight:400;letter-spacing:0px;transform:scaleX(0.9571);transform-origin:right center;">Row Count</div>
<div class="t" style="left:124.60px;top:296.54px;font-size:5.6px;line-height:6.72px;color:#4a4a4a;font-weight:700;letter-spacing:0px;transform:scaleX(0.8829);transform-origin:left center;">CUSTOMER_ID</div>
<div class="t" style="right:608.38px;top:296.54px;font-size:5.6px;line-height:6.72px;color:#444;font-weight:400;letter-spacing:0px;">1</div>
<div class="t" style="right:524.02px;top:296.54px;font-size:5.6px;line-height:6.72px;color:#444;font-weight:400;letter-spacing:0px;">decimal</div>
<div class="t" style="right:440.88px;top:296.54px;font-size:5.6px;line-height:6.72px;color:#444;font-weight:400;letter-spacing:0px;">Yes</div>
<div class="t" style="right:356.88px;top:296.54px;font-size:5.6px;line-height:6.72px;color:#444;font-weight:400;letter-spacing:0px;">2</div>
<div class="t" style="right:273.26px;top:296.54px;font-size:5.6px;line-height:6.72px;color:#444;font-weight:400;letter-spacing:0px;">4.750000</div>
<div class="t" style="right:189.48px;top:296.54px;font-size:5.6px;line-height:6.72px;color:#444;font-weight:400;letter-spacing:0px;">9</div>
<div class="t" style="right:105.88px;top:296.54px;font-size:5.6px;line-height:6.72px;color:#444;font-weight:400;letter-spacing:0px;">1</div>
<div style="position:absolute;left:113.8px;top:309.5px;width:715.7px;height:1.0px;background:#e2e2e2;"></div>
<div style="position:absolute;left:113.8px;top:309.5px;width:84.2px;height:1.0px;background:#d6d6d6;"></div>
<div class="t" style="left:124.60px;top:316.54px;font-size:5.6px;line-height:6.72px;color:#4a4a4a;font-weight:700;letter-spacing:0px;transform:scaleX(0.8952);transform-origin:left center;">B_CLASSNAME</div>
<div class="t" style="right:608.38px;top:316.54px;font-size:5.6px;line-height:6.72px;color:#444;font-weight:400;letter-spacing:0px;">2</div>
<div class="t" style="right:524.53px;top:316.54px;font-size:5.6px;line-height:6.72px;color:#444;font-weight:400;letter-spacing:0px;">nvarchar</div>
<div class="t" style="right:440.84px;top:316.54px;font-size:5.6px;line-height:6.72px;color:#444;font-weight:400;letter-spacing:0px;">No</div>
<div class="t" style="right:356.75px;top:316.54px;font-size:5.6px;line-height:6.72px;color:#444;font-weight:400;letter-spacing:0px;">Customer</div>
<div class="t" style="right:189.35px;top:316.54px;font-size:5.6px;line-height:6.72px;color:#444;font-weight:400;letter-spacing:0px;">Customer</div>
<div class="t" style="right:105.75px;top:316.54px;font-size:5.6px;line-height:6.72px;color:#444;font-weight:400;letter-spacing:0px;">Customer</div>
<div style="position:absolute;left:113.8px;top:329.5px;width:715.7px;height:1.0px;background:#e2e2e2;"></div>
<div style="position:absolute;left:113.8px;top:329.5px;width:84.2px;height:1.0px;background:#d6d6d6;"></div>
<div class="t" style="left:124.60px;top:336.54px;font-size:5.6px;line-height:6.72px;color:#4a4a4a;font-weight:700;letter-spacing:0px;transform:scaleX(0.8480);transform-origin:left center;">B_PUBID</div>
<div class="t" style="right:608.38px;top:336.54px;font-size:5.6px;line-height:6.72px;color:#444;font-weight:400;letter-spacing:0px;">3</div>
<div class="t" style="right:524.53px;top:336.54px;font-size:5.6px;line-height:6.72px;color:#444;font-weight:400;letter-spacing:0px;">nvarchar</div>
<div class="t" style="right:440.84px;top:336.54px;font-size:5.6px;line-height:6.72px;color:#444;font-weight:400;letter-spacing:0px;">No</div>
<div class="t" style="right:357.25px;top:336.54px;font-size:5.6px;line-height:6.72px;color:#444;font-weight:400;letter-spacing:0px;">CRM</div>
<div class="t" style="right:189.79px;top:336.54px;font-size:5.6px;line-height:6.72px;color:#444;font-weight:400;letter-spacing:0px;">MKT</div>
<div class="t" style="right:106.25px;top:336.54px;font-size:5.6px;line-height:6.72px;color:#444;font-weight:400;letter-spacing:0px;">CRM</div>
<div style="position:absolute;left:113.8px;top:349.5px;width:715.7px;height:1.0px;background:#e2e2e2;"></div>
<div style="position:absolute;left:113.8px;top:349.5px;width:84.2px;height:1.0px;background:#d6d6d6;"></div>
<div class="t" style="left:124.60px;top:356.54px;font-size:5.6px;line-height:6.72px;color:#4a4a4a;font-weight:700;letter-spacing:0px;transform:scaleX(0.8405);transform-origin:left center;">B_SOURCEID</div>
<div class="t" style="right:608.38px;top:356.54px;font-size:5.6px;line-height:6.72px;color:#444;font-weight:400;letter-spacing:0px;">4</div>
<div class="t" style="right:524.53px;top:356.54px;font-size:5.6px;line-height:6.72px;color:#444;font-weight:400;letter-spacing:0px;">nvarchar</div>
<div class="t" style="right:440.84px;top:356.54px;font-size:5.6px;line-height:6.72px;color:#444;font-weight:400;letter-spacing:0px;">No</div>
<div class="t" style="right:356.88px;top:356.54px;font-size:5.6px;line-height:6.72px;color:#444;font-weight:400;letter-spacing:0px;">2</div>
<div class="t" style="right:189.93px;top:356.54px;font-size:5.6px;line-height:6.72px;color:#444;font-weight:400;letter-spacing:0px;">987685</div>
<div class="t" style="right:105.88px;top:356.54px;font-size:5.6px;line-height:6.72px;color:#444;font-weight:400;letter-spacing:0px;">2</div>
<div style="position:absolute;left:113.8px;top:369.5px;width:715.7px;height:1.0px;background:#e2e2e2;"></div>
<div style="position:absolute;left:113.8px;top:369.5px;width:84.2px;height:1.0px;background:#d6d6d6;"></div>
<div class="t" style="left:124.60px;top:376.54px;font-size:5.6px;line-height:6.72px;color:#4a4a4a;font-weight:700;letter-spacing:0px;transform:scaleX(0.8844);transform-origin:left center;">B_BATCHID</div>
<div class="t" style="right:608.38px;top:376.54px;font-size:5.6px;line-height:6.72px;color:#444;font-weight:400;letter-spacing:0px;">5</div>
<div class="t" style="right:524.02px;top:376.54px;font-size:5.6px;line-height:6.72px;color:#444;font-weight:400;letter-spacing:0px;">decimal</div>
<div class="t" style="right:440.84px;top:376.54px;font-size:5.6px;line-height:6.72px;color:#444;font-weight:400;letter-spacing:0px;">No</div>
<div class="t" style="right:356.66px;top:376.54px;font-size:5.6px;line-height:6.72px;color:#444;font-weight:400;letter-spacing:0px;">143</div>
<div class="t" style="right:274.04px;top:376.54px;font-size:5.6px;line-height:6.72px;color:#444;font-weight:400;letter-spacing:0px;">143.750000</div>
<div class="t" style="right:189.26px;top:376.54px;font-size:5.6px;line-height:6.72px;color:#444;font-weight:400;letter-spacing:0px;">146</div>
<div class="t" style="right:105.66px;top:376.54px;font-size:5.6px;line-height:6.72px;color:#444;font-weight:400;letter-spacing:0px;">143</div>
<div style="position:absolute;left:113.8px;top:389.5px;width:715.7px;height:1.0px;background:#e2e2e2;"></div>
<div style="position:absolute;left:113.8px;top:389.5px;width:84.2px;height:1.0px;background:#d6d6d6;"></div>
<div style="position:absolute;left:829.5px;top:289.1px;width:8.5px;height:107.9px;background:#f4f4f4;"></div>
<div style="position:absolute;left:830.6px;top:299.3px;width:6.4px;height:28.5px;background:#c1c1c1;"></div>
<svg style="position:absolute;left:831.3px;top:292.6px" width="5" height="4" viewBox="0 0 10 8"><path d="M1 7l4-5 4 5z" fill="#505050"/></svg><div style="position:absolute;left:845px;top:76.5px;width:8.5px;height:320.5px;background:#f1f1f1;"></div>
<div style="position:absolute;left:846.1px;top:85px;width:6.4px;height:258px;background:#c1c1c1;"></div>
<svg style="position:absolute;left:846.8px;top:78.6px" width="5" height="4" viewBox="0 0 10 8"><path d="M1 7l4-5 4 5z" fill="#505050"/></svg><svg style="position:absolute;left:846.8px;top:390.2px" width="5" height="4" viewBox="0 0 10 8"><path d="M1 1l4 5 4-5z" fill="#505050"/></svg></body></html>
